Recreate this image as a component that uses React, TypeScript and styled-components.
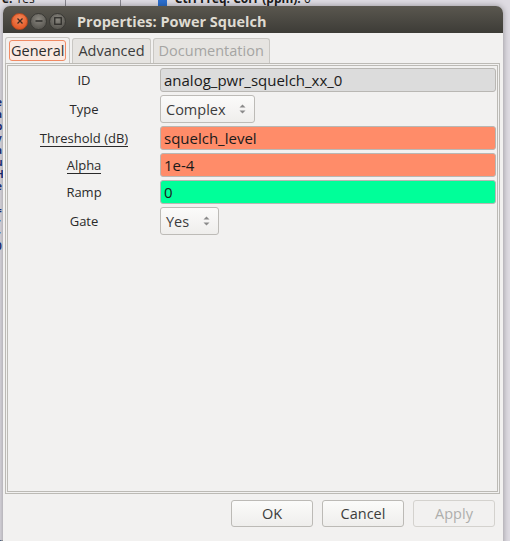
import styled, { createGlobalStyle } from 'styled-components';

const GlobalStyle = createGlobalStyle`
  html, body {
    margin: 0;
    padding: 0;
    background: #d4d0d8;
  }
  body {
    font-family: "Open Sans", "DejaVu Sans", sans-serif;
    font-size: 14px;
    color: #3c3c3c;
  }
`;

const FONT = `"Open Sans", "DejaVu Sans", sans-serif`;

type Param = {
  label: string;
  value: string;
  kind: 'entry' | 'combo';
  color?: string;
  underline?: boolean;
  comboWidth?: number;
};

const params: Param[] = [
  { label: 'ID', value: 'analog_pwr_squelch_xx_0', kind: 'entry', color: '#dcdcdc' },
  { label: 'Type', value: 'Complex', kind: 'combo', comboWidth: 95 },
  { label: 'Threshold (dB)', value: 'squelch_level', kind: 'entry', color: '#ff8c69', underline: true },
  { label: 'Alpha', value: '1e-4', kind: 'entry', color: '#ff8c69', underline: true },
  { label: 'Ramp', value: '0', kind: 'entry', color: '#00ff99' },
  { label: 'Gate', value: 'Yes', kind: 'combo', comboWidth: 59 },
];

// glyph fragments of the window behind the dialog, peeking out on the left
const sideBits = ['e', 'a', 'b', 'v', 'a', 'u', 'H', 'e', '', '=', 'r', 'r', '0', ':', '(', 'i'];

export default function App() {
  return (
    <>
      <GlobalStyle />
      <Desktop>
        <BackWindow>
          <BackRow>
            <BackText>
              <b>e:</b> Yes
            </BackText>
            <BackDivider />
            <BackDivider />
            <BackCell />
            <BackText>
              <b>Ctrl Freq. Corr (ppm):</b> 0
            </BackText>
          </BackRow>
          <BackSide>
            {sideBits.map((c, i) => (
              <SideBit key={i}>{c || '\u00a0'}</SideBit>
            ))}
          </BackSide>
          <BackBottom>UUUUUUUUUUUUUUUUUUUUUUUUUUUUUUUUUUUUUUUUUUUU</BackBottom>
        </BackWindow>

        <Dialog>
          <TitleBar>
            <WinButtons>
              <WinButton $close>
                <svg width="8" height="8" viewBox="0 0 8 8">
                  <path d="M1.5 1.5 L6.5 6.5 M6.5 1.5 L1.5 6.5" stroke="#3a2a22" strokeWidth="1.3" />
                </svg>
              </WinButton>
              <WinButton>
                <svg width="8" height="8" viewBox="0 0 8 8">
                  <path d="M0.5 4 H7.5" stroke="#2e2d2a" strokeWidth="1.5" />
                </svg>
              </WinButton>
              <WinButton>
                <svg width="8" height="8" viewBox="0 0 8 8">
                  <rect x="0.75" y="0.75" width="6.5" height="6.5" fill="none" stroke="#2e2d2a" strokeWidth="1.3" />
                </svg>
              </WinButton>
            </WinButtons>
            <Title>Properties: Power Squelch</Title>
          </TitleBar>

          <Body>
            <Tabs>
              <Tab $active>
                <TabFocus>General</TabFocus>
              </Tab>
              <Tab>
                <TabLabel>Advanced</TabLabel>
              </Tab>
              <Tab $disabled>
                <TabLabel>Documentation</TabLabel>
              </Tab>
            </Tabs>

            <Panel>
              <Form>
                {params.map(p => (
                  <Row key={p.label}>
                    <LabelCell>
                      <Label $underline={p.underline}>{p.label}</Label>
                    </LabelCell>
                    {p.kind === 'entry' ? (
                      <Entry $bg={p.color || '#ffffff'}>{p.value}</Entry>
                    ) : (
                      <Combo $width={p.comboWidth || 90}>
                        <span>{p.value}</span>
                        <svg width="7" height="12" viewBox="0 0 7 12">
                          <path d="M0.5 4.5 L3.5 1.5 L6.5 4.5 Z" fill="#8a8a8a" />
                          <path d="M0.5 7.5 L3.5 10.5 L6.5 7.5 Z" fill="#8a8a8a" />
                        </svg>
                      </Combo>
                    )}
                  </Row>
                ))}
              </Form>
            </Panel>

            <Footer>
              <Button>OK</Button>
              <Button>Cancel</Button>
              <Button disabled>Apply</Button>
            </Footer>
          </Body>
        </Dialog>
      </Desktop>
    </>
  );
}

const Desktop = styled.div`
  position: relative;
  width: 510px;
  height: 541px;
  overflow: hidden;
  background: #d4d0d8;
`;

const BackWindow = styled.div`
  position: absolute;
  inset: 0;
  background: #dedbe2;
  font-family: ${FONT};
  color: #1a1a1a;
`;

const BackRow = styled.div`
  display: flex;
  align-items: flex-start;
  height: 6px;
  overflow: hidden;
  font-size: 12px;
`;

const BackText = styled.span`
  white-space: nowrap;
  margin-top: -8px;
  margin-left: 2px;
  line-height: 14px;
`;

const BackDivider = styled.span`
  width: 1px;
  height: 6px;
  background: #8a8890;
  margin-left: 54px;
  &:nth-of-type(2) {
    margin-left: 30px;
  }
`;

const BackCell = styled.span`
  width: 9px;
  height: 6px;
  margin: 0 6px 0 37px;
  background: #2b6fcf;
`;

const BackSide = styled.div`
  position: absolute;
  left: -4px;
  top: 96px;
  width: 8px;
  display: flex;
  flex-direction: column;
`;

const SideBit = styled.span`
  height: 12px;
  font-size: 10px;
  line-height: 12px;
  color: #1e2f7a;
  font-weight: bold;
  overflow: hidden;
`;

const BackBottom = styled.div`
  position: absolute;
  left: -4px;
  bottom: -6px;
  font-size: 16px;
  color: #2a2a2a;
  white-space: nowrap;
  letter-spacing: -1px;
`;

const Dialog = styled.div`
  position: absolute;
  left: 3px;
  top: 6px;
  width: 500px;
  height: 545px;
  display: flex;
  flex-direction: column;
  border-radius: 7px 7px 0 0;
  box-shadow: 0 0 6px rgba(0, 0, 0, 0.35);
  overflow: hidden;
`;

const TitleBar = styled.div`
  height: 27px;
  flex: none;
  display: flex;
  align-items: center;
  padding: 3px 0 0 8px;
  box-sizing: border-box;
  background: linear-gradient(#5a574f, #3d3c37);
`;

const WinButtons = styled.div`
  display: flex;
  gap: 2px;
`;

const WinButton = styled.div<{ $close?: boolean }>`
  width: 17px;
  height: 17px;
  border-radius: 50%;
  display: flex;
  align-items: center;
  justify-content: center;
  box-sizing: border-box;
  border: 1px solid ${p => (p.$close ? '#b8481f' : '#3a3935')};
  background: ${p =>
    p.$close
      ? 'radial-gradient(circle at 50% 35%, #f58a5c, #e35d2b 70%)'
      : 'radial-gradient(circle at 50% 35%, #8a8780, #5d5b55 70%)'};
`;

const Title = styled.div`
  margin-left: 11px;
  color: #dfdbd2;
  font-family: ${FONT};
  font-weight: bold;
  font-size: 14.5px;
  white-space: nowrap;
`;

const Body = styled.div`
  flex: 1;
  display: flex;
  flex-direction: column;
  background: #f2f1f0;
  padding: 4px 0 0 2px;
`;

const Tabs = styled.div`
  display: flex;
  gap: 2px;
  height: 26px;
  align-items: flex-end;
`;

const Tab = styled.div<{ $active?: boolean; $disabled?: boolean }>`
  height: ${p => (p.$active ? 26 : 25)}px;
  box-sizing: border-box;
  display: flex;
  align-items: center;
  padding: 0 3px;
  border: 1px solid #c9c7c3;
  border-bottom: none;
  border-radius: 3px 3px 0 0;
  background: ${p => (p.$active ? '#f2f1f0' : '#e6e4e1')};
  color: ${p => (p.$disabled ? '#a5a5a3' : '#3c3c3c')};
  font-family: ${FONT};
  font-size: 14.5px;
`;

const TabFocus = styled.div`
  padding: 0 1px;
  height: 21px;
  line-height: 20px;
  box-sizing: border-box;
  border: 1px solid #f08a64;
  border-radius: 3px;
  background: #faeae3;
  color: #2c2c2c;
`;

const TabLabel = styled.div`
  padding: 0 2px;
  line-height: 20px;
`;

const Panel = styled.div`
  height: 431px;
  margin-right: 3px;
  box-sizing: border-box;
  border: 3px double #bcbab5;
  padding: 2px 0 0 0;
`;

const Form = styled.div`
  display: flex;
  flex-direction: column;
  gap: 3px;
`;

const Row = styled.div`
  display: grid;
  grid-template-columns: 152px 1fr;
  align-items: center;
`;

const LabelCell = styled.div`
  display: flex;
  justify-content: center;
`;

const Label = styled.span<{ $underline?: boolean }>`
  font-family: ${FONT};
  font-size: 13px;
  color: #2a2a2a;
  border-bottom: ${p => (p.$underline ? '1px solid #2a2a2a' : 'none')};
  line-height: 16px;
`;

const Entry = styled.div<{ $bg: string }>`
  height: 24px;
  margin-right: 1px;
  box-sizing: border-box;
  padding: 0 3px;
  display: flex;
  align-items: center;
  border: 1px solid #b9b7b3;
  border-radius: 3px;
  background: ${p => p.$bg};
  font-family: ${FONT};
  font-size: 15px;
  color: #1a1a1a;
`;

const Combo = styled.div<{ $width: number }>`
  width: ${p => p.$width}px;
  height: 28px;
  box-sizing: border-box;
  padding: 0 8px 0 5px;
  display: flex;
  align-items: center;
  justify-content: space-between;
  border: 1px solid #bdbbb7;
  border-radius: 3px;
  background: linear-gradient(#fbfbfa, #efeeec);
  font-family: ${FONT};
  font-size: 14.5px;
  color: #3c3c3c;
`;

const Footer = styled.div`
  display: flex;
  justify-content: flex-end;
  gap: 9px;
  padding: 6px 8px 0 0;
`;

const Button = styled.button`
  width: 82px;
  height: 27px;
  border: 1px solid #bcbab6;
  border-radius: 3px;
  background: linear-gradient(#fbfbfa, #efeeec);
  font-family: ${FONT};
  font-size: 14.5px;
  color: #3c3c3c;
  padding: 0;
  &:disabled {
    color: #aeaeac;
    border-color: #d4d2ce;
    background: #f2f1f0;
  }
`;
